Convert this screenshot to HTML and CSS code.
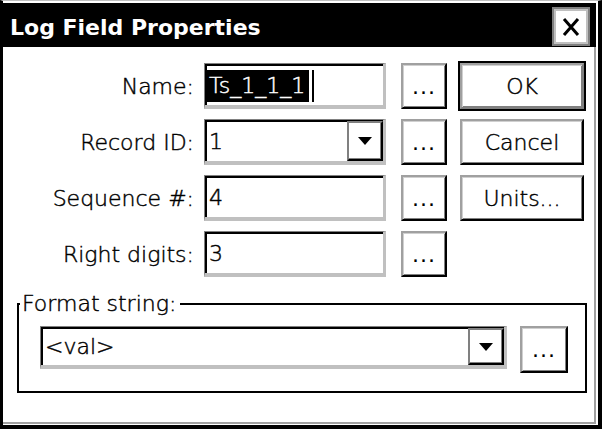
FILE: index.html
```html
<!DOCTYPE html>
<html>
<head>
<meta charset="utf-8">
<link rel="stylesheet" href="styles.css">
</head>
<body>
<div class="window">
  <div class="titlebar">
    <span class="title">Log Field Properties</span>
    <button class="close" aria-label="Close">
      <svg width="18" height="20" viewBox="0 0 18 20"><path d="M2 2 L16 18 M16 2 L2 18" stroke="#000" stroke-width="3" fill="none"/></svg>
    </button>
  </div>
  <div class="body">
    <div class="form">
      <label class="lbl">Name:</label>
      <div class="field"><span class="sel">Ts_1_1_1</span><span class="caret"></span></div>
      <button class="btn dots">...</button>
      <button class="btn cmd default">OK</button>

      <label class="lbl">Record ID:</label>
      <div class="field combo"><span class="val">1</span><span class="drop"><svg width="14" height="8" viewBox="0 0 14 8"><path d="M0 0 H14 L7 8 Z" fill="#000"/></svg></span></div>
      <button class="btn dots">...</button>
      <button class="btn cmd">Cancel</button>

      <label class="lbl">Sequence #:</label>
      <div class="field"><span class="val">4</span></div>
      <button class="btn dots">...</button>
      <button class="btn cmd">Units...</button>

      <label class="lbl">Right digits:</label>
      <div class="field"><span class="val">3</span></div>
      <button class="btn dots">...</button>
    </div>
    <fieldset class="group">
      <legend>Format string:</legend>
      <div class="grouprow">
        <div class="field combo wide"><span class="val">&lt;val&gt;</span><span class="drop"><svg width="14" height="8" viewBox="0 0 14 8"><path d="M0 0 H14 L7 8 Z" fill="#000"/></svg></span></div>
        <button class="btn dots big">...</button>
      </div>
    </fieldset>
  </div>
</div>
</body>
</html>
```
FILE: styles.css
```css
* { box-sizing: border-box; }
body {
  margin: 0;
  font-family: "DejaVu Sans", "Verdana", sans-serif;
  font-size: 22px;
  font-weight: 200;
  -webkit-text-stroke: 0.45px #000;
  color: #000;
  background: #fff;
}
.window {
  width: 602px;
  height: 429px;
  border-top: 1px solid #c0c0c0;
  border-left: 3px solid #000;
  border-right: 4px solid #000;
  border-bottom: 4px solid #000;
  padding-top: 2px;
  padding-right: 2px;
  padding-bottom: 1px;
  display: flex;
  flex-direction: column;
  background: #fff;
}
.titlebar {
  height: 44px;
  background: #000;
  color: #fff;
  display: flex;
  justify-content: space-between;
  align-items: flex-start;
  padding-left: 7px;
  flex: none;
}
.title {
  font-weight: bold;
  line-height: 44px;
  padding-top: 3px;
  -webkit-text-stroke: 0;
}
.close {
  width: 38px;
  height: 39px;
  margin: 4px 6px 0 0;
  padding: 0;
  background: #fff;
  border: 2px solid #808080;
  box-shadow: inset 0 0 0 2px #c0c0c0;
  display: flex;
  align-items: center;
  justify-content: center;
}
.body {
  flex: 1;
  border-right: 2px solid #a0a0a0;
  border-bottom: 2px solid #a0a0a0;
  padding-top: 16px;
}
.form {
  display: grid;
  grid-template-columns: 191px 192px 61px 138px;
  grid-auto-rows: 46px;
  row-gap: 10px;
}
.lbl {
  display: flex;
  align-items: center;
  justify-content: flex-end;
  white-space: nowrap;
}
.field {
  margin-left: 10px;
  background: #fff;
  border-style: solid;
  border-width: 1px 3px 4px 1px;
  border-color: #808080 #c0c0c0 #c0c0c0 #808080;
  box-shadow: inset 2px 2px 0 #000;
  display: flex;
  align-items: center;
  padding-left: 4px;
  padding-top: 2px;
}
.form .field { width: 182px; }
.val { line-height: 30px; }
.sel {
  background: #000;
  color: #fff;
  -webkit-text-stroke: 0.45px #fff;
  line-height: 32px;
  padding: 0 4px 0 2px;
  margin-left: -2px;
}
.caret {
  width: 2px;
  height: 32px;
  background: #000;
  margin-left: 3px;
}
.combo {
  justify-content: space-between;
  padding-right: 0;
  align-items: stretch;
}
.combo .val { align-self: center; }
.drop {
  width: 36px;
  border-style: solid;
  border-width: 2px;
  border-color: #808080 #000 #000 #808080;
  box-shadow: inset -1px -1px 0 #808080;
  display: flex;
  align-items: center;
  justify-content: center;
  margin-top: -1px;
  background: #fff;
}
.btn {
  font-family: inherit;
  font-size: 22px;
  font-weight: 200;
  color: #000;
  background: #fff;
  padding: 0;
  border-style: solid;
  border-width: 2px;
  border-color: #a0a0a0 #000 #000 #a0a0a0;
  box-shadow: inset 1px 1px 0 #d0d0d0, inset -1px -1px 0 #808080;
}
.dots {
  margin-left: 15px;
  width: 46px;
  letter-spacing: 1px;
  font-weight: normal;
  -webkit-text-stroke: 0;
}
.cmd {
  margin-left: 13px;
  width: 124px;
}
.default {
  outline: 2px solid #000;
  outline-offset: 0;
  border-color: #a0a0a0 #808080 #808080 #a0a0a0;
}
.group {
  margin: 15px 7px 0 14px;
  padding: 0;
  border: 2px solid #000;
}
.group legend {
  margin-left: 1px;
  padding: 0 4px 0 2px;
  line-height: 24px;
}
.grouprow {
  display: flex;
  align-items: flex-start;
  padding: 10px 17px 18px 21px;
}
.wide {
  margin-left: 0;
  width: 467px;
  height: 43px;
}
.big {
  margin-left: 13px;
  width: 48px;
  height: 47px;
}
```
